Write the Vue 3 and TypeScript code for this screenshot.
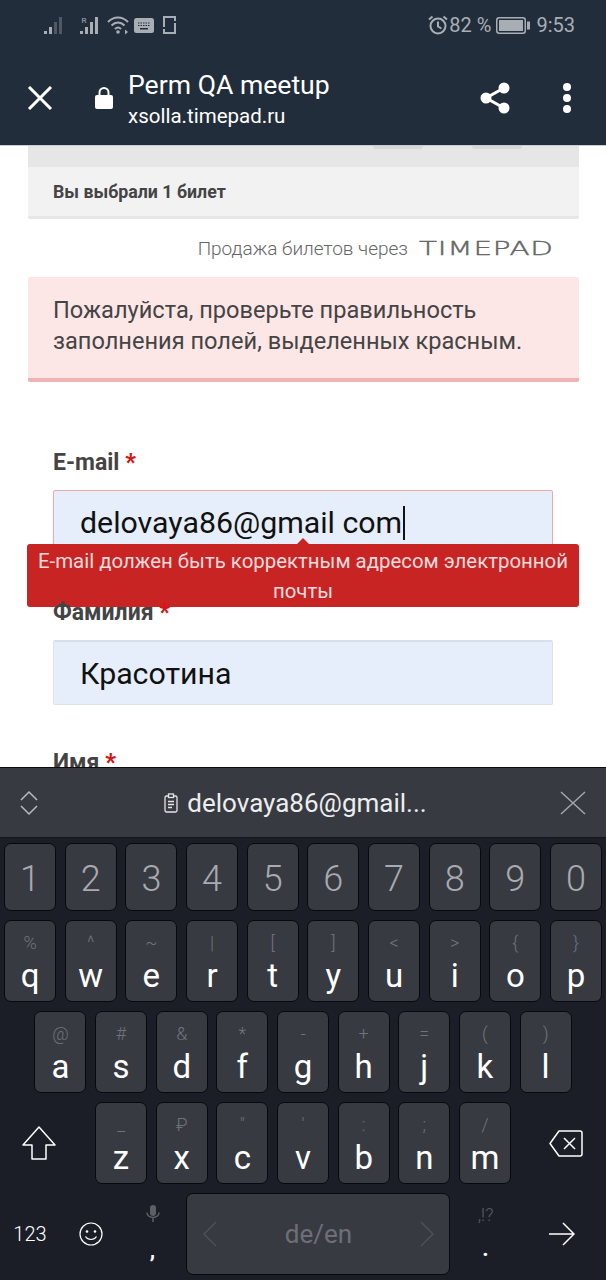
<template>
  <div class="phone">
    <header class="top">
      <div class="status">
        <div class="status-left">
          <svg class="sig1" width="20" height="20" viewBox="0 0 20 20">
            <rect x="0" y="16" width="3" height="3" fill="#a9aeb5" />
            <rect x="5" y="12" width="3" height="7" fill="#a9aeb5" />
            <rect x="10" y="7" width="3" height="12" fill="#4f5864" />
            <rect x="15" y="2" width="3" height="17" fill="#4f5864" />
          </svg>
          <svg class="sig2" width="22" height="20" viewBox="0 0 22 20">
            <rect x="0" y="16" width="3" height="3" fill="#a9aeb5" />
            <rect x="5" y="12" width="3" height="7" fill="#a9aeb5" />
            <rect x="10" y="7" width="3" height="12" fill="#a9aeb5" />
            <rect x="15" y="2" width="3" height="17" fill="#a9aeb5" />
            <text x="1.5" y="8" class="roam">R</text>
          </svg>
          <svg class="wifi" width="24" height="20" viewBox="0 0 24 20" fill="none" stroke="#a9aeb5" stroke-width="2">
            <path d="M1 7c6-6 14-6 20 0" />
            <path d="M4.500 10.500c4-4 9-4 13 0" />
            <path d="M8 14c2-2 4-2 6 0" />
            <circle cx="11" cy="17" r="1.800" fill="#a9aeb5" stroke="none" />
            <path d="M18 14.500l3 2.500-3 2.500z" fill="#a9aeb5" stroke="none" />
          </svg>
          <svg class="kbd" width="20" height="15" viewBox="0 0 20 15">
            <rect width="20" height="15" rx="2.500" fill="#a9aeb5" />
            <path d="M4 5h12M4 7.500h12" stroke="#222d3b" stroke-width="1" stroke-dasharray="1.500 1" />
            <rect x="6" y="10" width="8" height="1.500" fill="#222d3b" />
          </svg>
          <svg class="rot" width="13" height="18" viewBox="0 0 13 18" fill="none" stroke="#a9aeb5" stroke-width="2">
            <path d="M12 5V1H1V11" />
            <path d="M1 13V17H12V7" />
          </svg>
        </div>
        <div class="status-right">
          <svg width="20" height="20" viewBox="0 0 20 20" fill="none" stroke="#a9aeb5" stroke-width="2">
            <circle cx="10" cy="11" r="7.500" />
            <path d="M10 6.500V11.500L13.500 13.500M1 4.500L4.500 1.500M19 4.500L15.500 1.500" />
          </svg>
          <span class="pct">82 %</span>
          <svg class="batt" width="34" height="17" viewBox="0 0 34 17">
            <rect x="0.750" y="0.750" width="28.500" height="15.500" rx="2.500" fill="none" stroke="#a9aeb5" stroke-width="1.500" />
            <rect x="3" y="3" width="24" height="11" fill="#a9aeb5" />
            <rect x="31" y="4.500" width="3" height="8" fill="#a9aeb5" />
          </svg>
          <span class="clock">9:53</span>
        </div>
      </div>
      <div class="toolbar">
        <svg class="close" width="26" height="24" viewBox="0 0 26 24" fill="none" stroke="#fff" stroke-width="3">
          <path d="M2 1L24 23M24 1L2 23" />
        </svg>
        <svg class="lock" width="18" height="23" viewBox="0 0 18 23">
          <path d="M4.500 10V6.500a4.500 4.500 0 0 1 9 0V10" fill="none" stroke="#fff" stroke-width="2" />
          <rect x="0" y="9" width="18" height="14" rx="2" fill="#fff" />
        </svg>
        <div class="titles">
          <div class="title">Perm QA meetup</div>
          <div class="host">xsolla.timepad.ru</div>
        </div>
        <svg class="share" width="30" height="32" viewBox="0 0 30 32">
          <path d="M24 6L6 16L24 26" fill="none" stroke="#fff" stroke-width="3" />
          <circle cx="24" cy="6" r="5.500" fill="#fff" />
          <circle cx="6" cy="16" r="5.500" fill="#fff" />
          <circle cx="24" cy="26" r="5.500" fill="#fff" />
        </svg>
        <div class="dots"><i></i><i></i><i></i></div>
      </div>
    </header>

    <main class="page">
      <section class="card">
        <div class="card-top">
          <span class="stub stub-a"></span>
          <span class="stub stub-b"></span>
        </div>
        <div class="card-sum">Вы выбрали 1 билет</div>
      </section>

      <div class="through">
        <span>Продажа билетов через</span>
        <span class="logo"><span class="logo-text">TIMEPAD</span></span>
      </div>

      <div class="alert">Пожалуйста, проверьте правильность заполнения полей, выделенных красным.</div>

      <form class="form">
        <div class="field">
          <label>E-mail <b>*</b></label>
          <div class="input bad">delovaya86@gmail com<span class="caret"></span></div>
          <div class="tip">E-mail должен быть корректным адресом электронной почты</div>
        </div>
        <div class="field">
          <label>Фамилия <b>*</b></label>
          <div class="input">Красотина</div>
        </div>
        <div class="field">
          <label>Имя <b>*</b></label>
        </div>
      </form>
    </main>

    <section class="keyboard">
      <div class="suggest">
        <svg width="20" height="26" viewBox="0 0 20 26" fill="none" stroke="#b9bbc0" stroke-width="1.500">
          <path d="M2 10L10 2L18 10M2 16L10 24L18 16" />
        </svg>
        <div class="clip">
          <svg width="14" height="20" viewBox="0 0 14 20" fill="none" stroke="#e4e5e7" stroke-width="1.300">
            <rect x="1" y="3" width="12" height="16" rx="1.500" />
            <rect x="4.500" y="1" width="5" height="3.500" fill="#383a42" />
            <path d="M4 8.500h6M4 11.500h6M4 14.500h4" />
          </svg>
          <span>delovaya86@gmail...</span>
        </div>
        <svg width="26" height="24" viewBox="0 0 26 24" fill="none" stroke="#a4a6ab" stroke-width="1.500">
          <path d="M1 1L25 23M25 1L1 23" />
        </svg>
      </div>

      <div class="keys">
        <div class="row nums">
          <div v-for="n in numbers" :key="n" class="key num">{{ n }}</div>
        </div>
        <div class="row letters">
          <div v-for="k in rowOne" :key="k[0]" class="key">
            <span class="alt">{{ k[1] }}</span><span class="main">{{ k[0] }}</span>
          </div>
        </div>
        <div class="row letters">
          <div v-for="k in rowTwo" :key="k[0]" class="key">
            <span class="alt">{{ k[1] }}</span><span class="main">{{ k[0] }}</span>
          </div>
        </div>
        <div class="row letters">
          <div class="side shift">
            <svg width="34" height="34" viewBox="0 0 34 34" fill="none" stroke="#fff" stroke-width="1.500">
              <path d="M17 1L33 19H24V33H10V19H1Z" stroke-linejoin="round" />
            </svg>
          </div>
          <div v-for="k in rowThree" :key="k[0]" class="key">
            <span class="alt">{{ k[1] }}</span><span class="main">{{ k[0] }}</span>
          </div>
          <div class="side del">
            <svg width="34" height="27" viewBox="0 0 34 27" fill="none" stroke="#fff" stroke-width="1.500">
              <path d="M10 1H31a2 2 0 0 1 2 2V24a2 2 0 0 1-2 2H10L1 13.500Z" stroke-linejoin="round" />
              <path d="M15 8L26 19M26 8L15 19" />
            </svg>
          </div>
        </div>
        <div class="bottom">
          <div class="fn digits">123</div>
          <div class="fn">
            <svg width="24" height="24" viewBox="0 0 24 24" fill="none" stroke="#fff" stroke-width="1.200">
              <circle cx="12" cy="12" r="11" />
              <circle cx="8" cy="9.500" r="1.300" fill="#fff" stroke="none" />
              <circle cx="16" cy="9.500" r="1.300" fill="#fff" stroke="none" />
              <path d="M6.500 14.500c2.500 4 8.500 4 11 0" />
            </svg>
          </div>
          <div class="fn stack mic">
            <svg width="14" height="18" viewBox="0 0 14 18" fill="none" stroke="#5d5f66" stroke-width="1.500">
              <rect x="4" y="0" width="6" height="11" rx="3" fill="#5d5f66" stroke="none" />
              <path d="M1 7.500c0 6.500 12 6.500 12 0M7 13v4" />
            </svg>
            <span class="punct">,</span>
          </div>
          <div class="space">
            <svg width="14" height="26" viewBox="0 0 14 26" fill="none" stroke="#4e5057" stroke-width="1.500"><path d="M13 1L1 13L13 25" /></svg>
            <span>de/en</span>
            <svg width="14" height="26" viewBox="0 0 14 26" fill="none" stroke="#4e5057" stroke-width="1.500"><path d="M1 1L13 13L1 25" /></svg>
          </div>
          <div class="fn stack">
            <span class="more">,!?</span>
            <span class="punct dot">.</span>
          </div>
          <div class="fn">
            <svg width="26" height="24" viewBox="0 0 26 24" fill="none" stroke="#fff" stroke-width="1.500">
              <path d="M0 12H25M14 1L25 12L14 23" />
            </svg>
          </div>
        </div>
      </div>
    </section>
  </div>
</template>

<script setup lang="ts">
const numbers: string[] = ["1", "2", "3", "4", "5", "6", "7", "8", "9", "0"];

const rowOne: string[][] = [
  ["q", "%"], ["w", "^"], ["e", "~"], ["r", "|"], ["t", "["],
  ["y", "]"], ["u", "<"], ["i", ">"], ["o", "{"], ["p", "}"],
];
const rowTwo: string[][] = [
  ["a", "@"], ["s", "#"], ["d", "&"], ["f", "*"], ["g", "-"],
  ["h", "+"], ["j", "="], ["k", "("], ["l", ")"],
];
const rowThree: string[][] = [
  ["z", "_"], ["x", "₽"], ["c", '"'], ["v", "'"], ["b", ":"], ["n", ";"], ["m", "/"],
];
</script>

<style>
html,
body {
  margin: 0;
  background: #fff;
}
</style>

<style scoped>
.phone {
  width: 606px;
  height: 1280px;
  display: flex;
  flex-direction: column;
  overflow: hidden;
  font-family: Roboto, "Liberation Sans", sans-serif;
}

/* top chrome */
.top {
  height: 146px;
  flex: none;
  background: #222d3b;
  border-bottom: 1px solid #c9ccd0;
  box-sizing: border-box;
}
.status {
  height: 50px;
  padding: 0 31px 0 44px;
  display: flex;
  align-items: center;
  justify-content: space-between;
  color: #a9aeb5;
  font-size: 20px;
}
.status-left,
.status-right {
  display: flex;
  align-items: center;
}
.sig2 {
  margin-left: 16px;
}
.wifi {
  margin-left: 5px;
}
.kbd {
  margin-left: 3px;
}
.rot {
  margin-left: 9px;
}
.roam {
  font-size: 8px;
  fill: #a9aeb5;
}
.pct {
  margin-left: 1px;
}
.batt {
  margin-left: 5px;
}
.clock {
  margin-left: 6px;
}
.toolbar {
  height: 95px;
  display: flex;
  align-items: center;
  padding-left: 27px;
  color: #fff;
}
.lock {
  margin-left: 42px;
}
.titles {
  margin-left: 15px;
  flex: 1;
  margin-top: 2px;
}
.title {
  font-size: 26.600px;
  line-height: 34px;
}
.host {
  font-size: 20.500px;
  line-height: 28px;
}
.dots {
  width: 8px;
  margin: 0 35px 0 53px;
  display: flex;
  flex-direction: column;
  gap: 3px;
}
.dots i {
  display: block;
  width: 8px;
  height: 8px;
  border-radius: 50%;
  background: #fff;
}

/* page under the bar */
.page {
  height: 621px;
  flex: none;
  overflow: hidden;
  background: #fff;
  padding: 0 27px 0 28px;
  box-sizing: border-box;
}
.card-top {
  height: 21px;
  background: #e6e6e6;
  position: relative;
}
.stub {
  position: absolute;
  top: 0;
  width: 50px;
  height: 3px;
  border-radius: 0 0 3px 3px;
  background: #d8d8d8;
}
.stub-a {
  left: 345px;
}
.stub-b {
  left: 444px;
}
.card-sum {
  height: 49px;
  padding-left: 25px;
  display: flex;
  align-items: center;
  background: #f2f2f2;
  border-bottom: 3px solid #e6e6e6;
  border-radius: 0 0 2px 2px;
  font-size: 17.800px;
  font-weight: 700;
  color: #444;
}
.through {
  height: 58px;
  padding-right: 25px;
  display: flex;
  align-items: center;
  justify-content: flex-end;
  gap: 11px;
  font-size: 19px;
  font-weight: 300;
  color: #666;
}
.logo {
  display: block;
  width: 135px;
  font-family: "DejaVu Sans", sans-serif;
  font-size: 19px;
  color: #666;
}
.logo-text {
  display: inline-block;
  letter-spacing: 0.500px;
  -webkit-text-stroke: 0.400px #666;
  transform: scaleX(1.550);
  transform-origin: left center;
}
.alert {
  padding: 18px 25px 21px;
  background: #fde6e6;
  border-bottom: 4px solid #eeb3b3;
  border-radius: 2px;
  font-size: 23.600px;
  line-height: 31px;
  color: #444;
}
.form {
  margin: 0 26px 0 25px;
  padding-top: 64px;
}
.field {
  position: relative;
  margin-bottom: 41px;
}
.field label {
  display: block;
  height: 28px;
  line-height: 33px;
  margin-bottom: 16px;
  font-size: 23px;
  font-weight: 700;
  color: #444;
}
.field label b {
  color: #d81414;
}
.input {
  height: 65px;
  box-sizing: border-box;
  padding-left: 26px;
  display: flex;
  align-items: center;
  background: #e6eefb;
  border: 1px solid #dde2ea;
  border-top: 2px solid #d9dfe8;
  border-radius: 2px;
  font-size: 30.300px;
  color: #111;
}
.input.bad {
  border: 1px solid #eea9ad;
}
.caret {
  width: 2px;
  height: 34px;
  margin-left: 1px;
  background: #111;
}
.tip {
  position: absolute;
  top: 98px;
  left: -26px;
  right: -26px;
  padding: 2px 8px 1px;
  background: #c82424;
  border-radius: 3px;
  font-size: 20.400px;
  line-height: 30px;
  text-align: center;
  color: #f6dcdc;
}
.tip::before {
  content: "";
  position: absolute;
  top: -6px;
  left: 50%;
  width: 12px;
  height: 12px;
  margin-left: -6px;
  background: #c82424;
  transform: rotate(45deg) scale(0.7);
}

/* keyboard */
.keyboard {
  height: 513px;
  flex: none;
  background: #1b1e27;
  border-top: 1px solid #0b0c10;
  box-sizing: border-box;
}
.suggest {
  height: 70px;
  padding: 0 20px 0 19px;
  display: flex;
  align-items: center;
  justify-content: space-between;
  background: #383a42;
  border-bottom: 1px solid #16181e;
  box-sizing: border-box;
}
.clip {
  display: flex;
  align-items: center;
  gap: 9px;
  margin-right: 8px;
  font-size: 26px;
  color: #eceded;
}
.keys {
  padding: 5px 4px 0;
}
.row {
  display: flex;
  justify-content: center;
  gap: 8.670px;
  margin-bottom: 9px;
}
.key {
  flex: 0 0 52px;
  height: 82px;
  box-sizing: border-box;
  display: flex;
  flex-direction: column;
  align-items: center;
  justify-content: flex-end;
  background: #383a42;
  border: 1px solid #08090c;
  border-radius: 7px;
  color: #fff;
}
.key.num {
  height: 68px;
  justify-content: center;
  padding-top: 3px;
  font-size: 36px;
  font-weight: 300;
  color: #a8aab0;
}
.alt {
  font-size: 18px;
  line-height: 22px;
  font-weight: 300;
  color: #70727a;
}
.main {
  font-size: 33px;
  line-height: 44px;
  margin-bottom: 3px;
}
.side {
  flex: 0 0 83px;
  display: flex;
  align-items: center;
  justify-content: center;
}
.shift {
  padding-right: 11px;
  box-sizing: border-box;
}
.del {
  padding-left: 10px;
  box-sizing: border-box;
}
.bottom {
  display: grid;
  grid-template-columns: 52px 69px 61px 264px 71px 1fr;
  height: 82px;
}
.fn {
  display: flex;
  align-items: center;
  justify-content: center;
  color: #fff;
}
.digits {
  font-size: 20px;
  font-weight: 300;
}
.stack {
  flex-direction: column;
  justify-content: flex-start;
  padding-top: 12px;
}
.mic {
  padding-right: 6px;
}
.punct {
  font-size: 22px;
  line-height: 28px;
  margin-top: 14px;
  font-weight: 700;
}
.more {
  font-size: 18px;
  line-height: 20px;
  font-weight: 300;
  color: #5d5f66;
}
.dot {
  margin-top: 10px;
}
.space {
  display: flex;
  align-items: center;
  justify-content: space-between;
  padding: 0 15px 0 16px;
  background: #383a42;
  border: 1px solid #08090c;
  border-radius: 7px;
  box-sizing: border-box;
  font-size: 26px;
  color: #6d6f75;
}
</style>
